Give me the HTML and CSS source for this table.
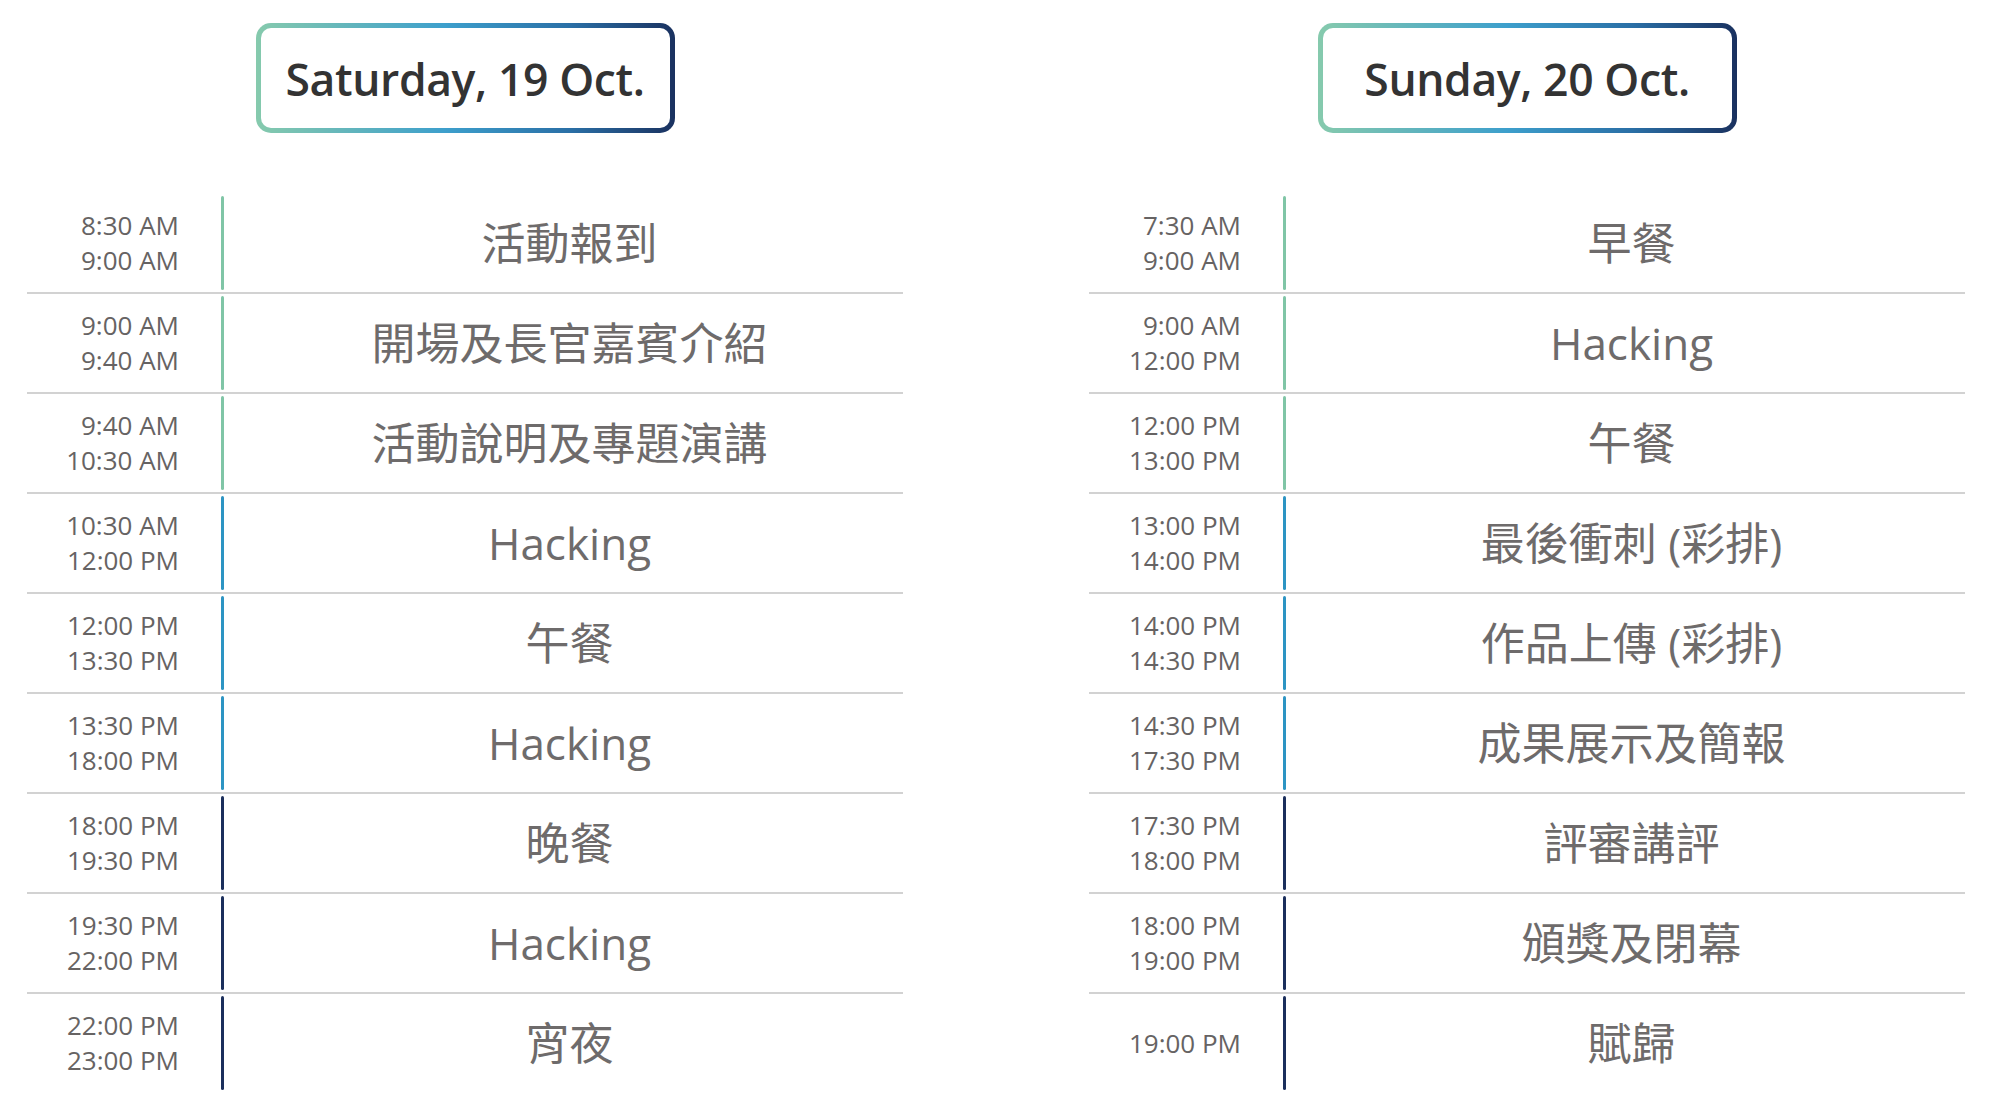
FILE: index.html
```html
<!DOCTYPE html>
<html lang="zh-Hant">
<head>
<meta charset="utf-8">
<title>Schedule</title>
<link rel="stylesheet" href="styles.css">
</head>
<body>
<main class="page">
  <section class="day">
    <div class="day-title">Saturday, 19 Oct.</div>
    <div class="table">
      <div class="row"><div class="time">8:30 AM<br>9:00 AM</div><div class="bar green"></div><div class="event">活動報到</div></div>
      <div class="row"><div class="time">9:00 AM<br>9:40 AM</div><div class="bar green"></div><div class="event">開場及長官嘉賓介紹</div></div>
      <div class="row"><div class="time">9:40 AM<br>10:30 AM</div><div class="bar green"></div><div class="event">活動說明及專題演講</div></div>
      <div class="row"><div class="time">10:30 AM<br>12:00 PM</div><div class="bar blue"></div><div class="event">Hacking</div></div>
      <div class="row"><div class="time">12:00 PM<br>13:30 PM</div><div class="bar blue"></div><div class="event">午餐</div></div>
      <div class="row"><div class="time">13:30 PM<br>18:00 PM</div><div class="bar blue"></div><div class="event">Hacking</div></div>
      <div class="row"><div class="time">18:00 PM<br>19:30 PM</div><div class="bar navy"></div><div class="event">晚餐</div></div>
      <div class="row"><div class="time">19:30 PM<br>22:00 PM</div><div class="bar navy"></div><div class="event">Hacking</div></div>
      <div class="row"><div class="time">22:00 PM<br>23:00 PM</div><div class="bar navy"></div><div class="event">宵夜</div></div>
    </div>
  </section>
  <section class="day">
    <div class="day-title">Sunday, 20 Oct.</div>
    <div class="table">
      <div class="row"><div class="time">7:30 AM<br>9:00 AM</div><div class="bar green"></div><div class="event">早餐</div></div>
      <div class="row"><div class="time">9:00 AM<br>12:00 PM</div><div class="bar green"></div><div class="event">Hacking</div></div>
      <div class="row"><div class="time">12:00 PM<br>13:00 PM</div><div class="bar green"></div><div class="event">午餐</div></div>
      <div class="row"><div class="time">13:00 PM<br>14:00 PM</div><div class="bar blue"></div><div class="event">最後衝刺 (彩排)</div></div>
      <div class="row"><div class="time">14:00 PM<br>14:30 PM</div><div class="bar blue"></div><div class="event">作品上傳 (彩排)</div></div>
      <div class="row"><div class="time">14:30 PM<br>17:30 PM</div><div class="bar blue"></div><div class="event">成果展示及簡報</div></div>
      <div class="row"><div class="time">17:30 PM<br>18:00 PM</div><div class="bar navy"></div><div class="event">評審講評</div></div>
      <div class="row"><div class="time">18:00 PM<br>19:00 PM</div><div class="bar navy"></div><div class="event">頒獎及閉幕</div></div>
      <div class="row"><div class="time">19:00 PM</div><div class="bar navy"></div><div class="event">賦歸</div></div>
    </div>
  </section>
</main>
</body>
</html>
```
FILE: styles.css
```css
html, body {
  margin: 0;
  padding: 0;
  background: #ffffff;
}

body {
  font-family: "Open Sans", "Noto Sans CJK TC", sans-serif;
}

.page {
  display: flex;
  gap: 186px;
  padding-left: 27px;
  padding-top: 23px;
}

.day {
  width: 876px;
  display: flex;
  flex-direction: column;
  align-items: center;
}

.day-title {
  box-sizing: border-box;
  width: 419px;
  height: 110px;
  border: 5px solid transparent;
  border-radius: 15px;
  background:
    linear-gradient(#ffffff, #ffffff) padding-box,
    linear-gradient(90deg, #86caad 0%, #3d9fcc 45%, #2a6fa6 75%, #1a315f 100%) border-box;
  display: flex;
  align-items: center;
  justify-content: center;
  font-family: "Open Sans", sans-serif;
  font-weight: 600;
  font-size: 44.5px;
  color: #333333;
  letter-spacing: -0.4px;
}

.table {
  width: 100%;
  margin-top: 61px;
  display: flex;
  flex-direction: column;
}

.row {
  display: flex;
  align-items: stretch;
  height: 100px;
  box-sizing: border-box;
  border-bottom: 2px solid #d2d2d2;
}

.row:last-child {
  border-bottom: none;
  height: 98px;
}

.time {
  box-sizing: border-box;
  width: 194px;
  padding-right: 42px;
  display: flex;
  flex-direction: column;
  justify-content: center;
  text-align: right;
  font-family: "Open Sans", sans-serif;
  font-size: 26px;
  line-height: 35px;
  color: #666363;
}

.bar {
  width: 3px;
  margin: 2px 0;
  border-radius: 2px;
}

.bar.green { background: #80c5a6; }
.bar.blue { background: #2c94c3; }
.bar.navy { background: #1b2f5c; }

.event {
  flex: 1;
  padding-left: 12px;
  display: flex;
  align-items: center;
  justify-content: center;
  font-family: "Open Sans", "Noto Sans CJK TC", sans-serif;
  font-size: 44px;
  line-height: 60px;
  color: #6e6b6b;
}
```
